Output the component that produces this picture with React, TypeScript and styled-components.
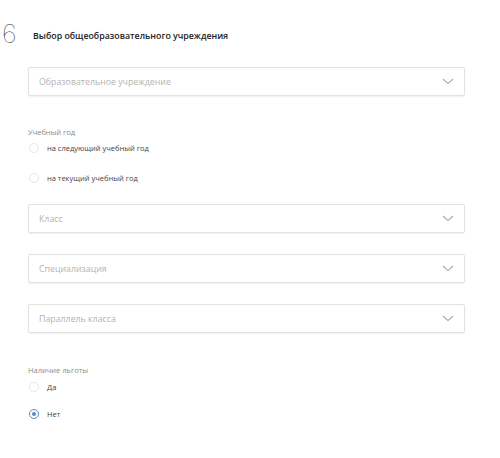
import styled, { createGlobalStyle } from "styled-components";

const GlobalStyle = createGlobalStyle`
  html, body {
    margin: 0;
    padding: 0;
    background: #fff;
    font-family: "Open Sans", "Liberation Sans", Arial, sans-serif;
  }
`;

const Page = styled.div`
  width: 500px;
  height: 458px;
  box-sizing: border-box;
  padding: 22px 0 0 0;
`;

const Header = styled.div`
  display: flex;
  align-items: center;
  height: 24px;
`;

const StepNumber = styled.span`
  width: 30px;
  padding-left: 2px;
  box-sizing: border-box;
  font-family: "Inter", "Lato", sans-serif;
  font-size: 26px;
  font-weight: 100;
  color: #444;
  line-height: 1;
`;

const Title = styled.h2`
  margin: 4px 0 0 3px;
  font-size: 8.8px;
  font-weight: 600;
  color: #222;
`;

const Form = styled.div`
  padding: 21px 35px 0 28px;
  display: flex;
  flex-direction: column;
`;

const Select = styled.div<{ $gap?: number }>`
  height: 29px;
  box-sizing: border-box;
  border: 1px solid #e2e2e2;
  border-radius: 2px;
  box-shadow: 0 1px 2px rgba(0, 0, 0, 0.06);
  display: flex;
  align-items: center;
  justify-content: space-between;
  padding: 0 10px 0 10px;
  margin-top: ${(p) => p.$gap ?? 0}px;
  font-size: 8.8px;
  color: #b3b3b3;
`;

const Chevron = () => (
  <svg width="12" height="7" viewBox="0 0 12 7" fill="none">
    <path d="M1 1L6 5.6L11 1" stroke="#a8a8a8" strokeWidth="1.1" />
  </svg>
);

const GroupLabel = styled.div<{ $gap: number }>`
  margin-top: ${(p) => p.$gap}px;
  font-size: 7.5px;
  color: #8a8a8a;
  line-height: 10px;
`;

const RadioRow = styled.label<{ $gap: number }>`
  display: flex;
  align-items: center;
  margin-top: ${(p) => p.$gap}px;
  font-size: 7.5px;
  color: #444;
  height: 12px;
`;

const RadioCircle = styled.span<{ $checked?: boolean }>`
  width: 10px;
  height: 10px;
  box-sizing: border-box;
  border-radius: 50%;
  border: 1px solid ${(p) => (p.$checked ? "#5d8dbb" : "#e6e6e6")};
  margin: 0 8px 0 1px;
  display: flex;
  align-items: center;
  justify-content: center;
  &::after {
    content: "";
    width: 4px;
    height: 4px;
    border-radius: 50%;
    background: ${(p) => (p.$checked ? "#5d8dbb" : "transparent")};
  }
`;

export default function App() {
  return (
    <>
      <GlobalStyle />
      <Page>
        <Header>
          <StepNumber>6</StepNumber>
          <Title>Выбор общеобразовательного учреждения</Title>
        </Header>
        <Form>
          <Select>
            Образовательное учреждение
            <Chevron />
          </Select>

          <GroupLabel $gap={31}>Учебный год</GroupLabel>
          <RadioRow $gap={5}>
            <RadioCircle />
            на следующий учебный год
          </RadioRow>
          <RadioRow $gap={18}>
            <RadioCircle />
            на текущий учебный год
          </RadioRow>

          <Select $gap={20}>
            Класс
            <Chevron />
          </Select>
          <Select $gap={21}>
            Специализация
            <Chevron />
          </Select>
          <Select $gap={21}>
            Параллель класса
            <Chevron />
          </Select>

          <GroupLabel $gap={32}>Наличие льготы</GroupLabel>
          <RadioRow $gap={6}>
            <RadioCircle />
            Да
          </RadioRow>
          <RadioRow $gap={15}>
            <RadioCircle $checked />
            Нет
          </RadioRow>
        </Form>
      </Page>
    </>
  );
}
